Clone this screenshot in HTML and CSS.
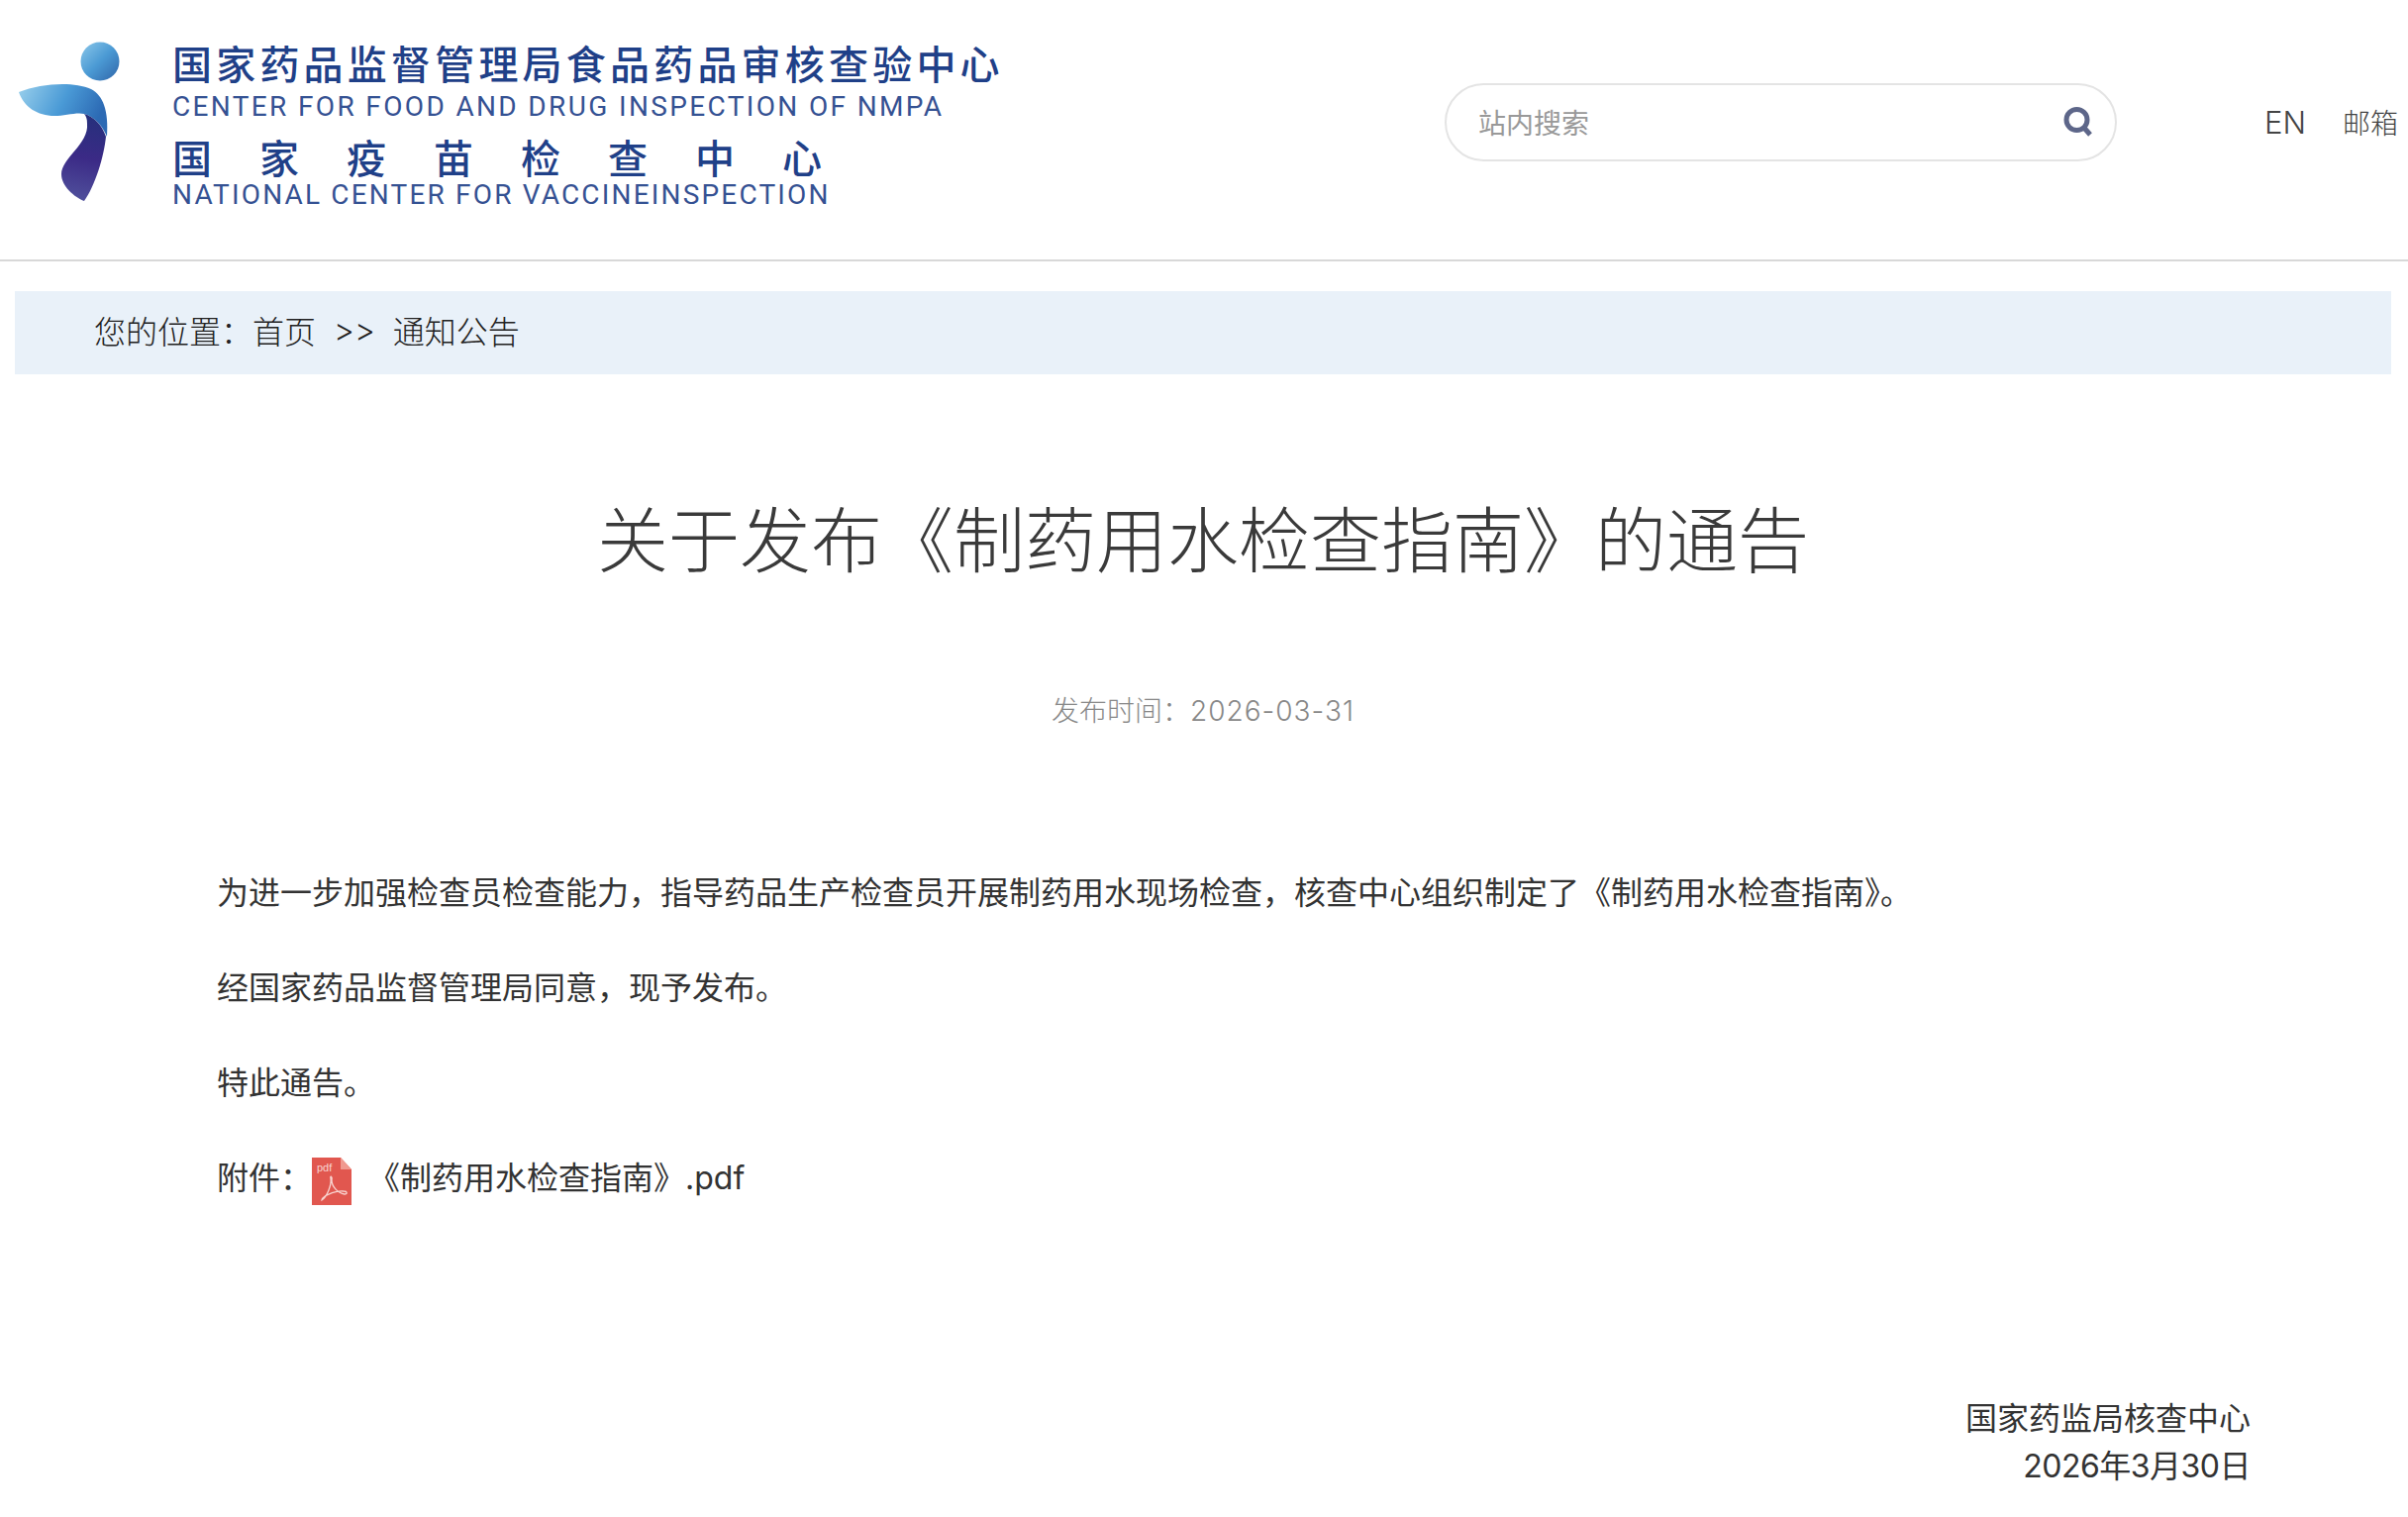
FILE: index.html
```html
<!DOCTYPE html>
<html lang="zh-CN">
<head>
    <meta charset="UTF-8">
    <meta name="viewport" content="width=device-width, initial-scale=1.0">
    <title>关于发布《制药用水检查指南》的通告</title>
    <link rel="stylesheet" href="styles.css">
</head>
<body>
    <div class="header">
        <div class="logo">
            <svg class="logo-mark" viewBox="0 0 130 190" width="130" height="190">
                <defs>
                    <linearGradient id="ball" x1="0" y1="0" x2="1" y2="1">
                        <stop offset="0" stop-color="#8cc8ea"/>
                        <stop offset="0.5" stop-color="#4b9ad4"/>
                        <stop offset="1" stop-color="#2f64a8"/>
                    </linearGradient>
                    <linearGradient id="wing" x1="0" y1="0" x2="1" y2="0.3">
                        <stop offset="0" stop-color="#9ad0ec"/>
                        <stop offset="0.55" stop-color="#4a9ad6"/>
                        <stop offset="1" stop-color="#2c6ab4"/>
                    </linearGradient>
                    <linearGradient id="tail" x1="0.5" y1="0" x2="0.4" y2="1">
                        <stop offset="0" stop-color="#26307c"/>
                        <stop offset="0.5" stop-color="#3b2a86"/>
                        <stop offset="1" stop-color="#50509c"/>
                    </linearGradient>
                </defs>
                <circle cx="101" cy="42" r="19.5" fill="url(#ball)"/>
                <path d="M19 73C42 64 74 62 92 70C104 76 110 92 108 118C103 106 95 98 85 95C78 93 65 97 55 97C38 97 24 88 19 73Z" fill="url(#wing)"/>
                <path d="M85 95C95 98 103 106 107 118C105 138 96 168 85 183C75 179 62 168 62 156C62 140 90 125 88 105C88 100 87 97 85 95Z" fill="url(#tail)"/>
            </svg>
            <div class="logo-text">
                <div class="logo-cn">国家药品监督管理局食品药品审核查验中心</div>
                <div class="logo-en">CENTER FOR FOOD AND DRUG INSPECTION OF NMPA</div>
                <div class="logo-cn logo-wide">国家疫苗检查中心</div>
                <div class="logo-en logo-en2">NATIONAL CENTER FOR VACCINEINSPECTION</div>
            </div>
        </div>
        <div class="header-right">
            <div class="search">
                <span class="search-hint">站内搜索</span>
                <svg class="search-icon" viewBox="0 0 30 30" width="30" height="30">
                    <circle cx="13.5" cy="13" r="10.5" fill="none" stroke="#5d6689" stroke-width="5"/>
                    <path d="M20 20L27 28" fill="none" stroke="#5d6689" stroke-width="5"/>
                </svg>
            </div>
            <a class="top-link link-en">EN</a>
            <a class="top-link">邮箱</a>
        </div>
    </div>

    <div class="main">
        <div class="crumb">
            <span>您的位置&#65306;首页</span>
            <span>&gt;&gt;</span>
            <span>通知公告</span>
        </div>

        <h1 class="title">关于发布《制药用水检查指南》的通告</h1>
        <div class="date">发布时间&#65306;<span class="date-num">2026-03-31</span></div>

        <div class="content">
            <p>为进一步加强检查员检查能力&#65292;指导药品生产检查员开展制药用水现场检查&#65292;核查中心组织制定了《制药用水检查指南》。</p>
            <p>经国家药品监督管理局同意&#65292;现予发布。</p>
            <p>特此通告。</p>
            <p class="attach">
                <span>附件&#65306;</span>
                <svg class="pdf-icon" viewBox="0 0 40 48" width="40" height="48">
                    <path d="M0 0H29L40 12V48H0Z" fill="#e1574f"/>
                    <path d="M29 0L40 12H29Z" fill="#f09a90"/>
                    <text x="5" y="14" class="pdf-label">pdf</text>
                    <path d="M10 43C15 40 20 28 19 21C18 18 21 19 20 23C20 29 26 36 33 37C36 37 36 34 32 34C25 33 15 37 11 41C10 42 10 43 10 43Z" fill="none" stroke="#f8d4d0" stroke-width="1.3"/>
                </svg>
                <span>《制药用水检查指南》.pdf</span>
            </p>
        </div>

        <div class="sign">
            <div>国家药监局核查中心</div>
            <div class="sign-date">2026年3月30日</div>
        </div>
    </div>
</body>
</html>
```

FILE: styles.css
```css
html, body {
    margin: 0;
    padding: 0;
    height: 100%;
    overflow: hidden;
}

body {
    font-family: "Inter", "Noto Sans CJK SC", sans-serif;
    background: #fff;
    color: #333;
}

.header {
    height: 262px;
    border-bottom: 2px solid #d8d8d8;
    display: flex;
    justify-content: space-between;
    align-items: center;
}

.logo {
    display: flex;
    align-items: flex-start;
    height: 262px;
}

.logo-mark {
    margin-top: 20px;
    margin-right: 44px;
    flex: none;
}

.logo-text {
    padding-top: 39px;
    color: #1f4088;
    white-space: nowrap;
}

.logo-cn {
    font-family: "Noto Sans CJK SC", sans-serif;
    font-size: 40px;
    line-height: 48px;
    letter-spacing: 4.2px;
    height: 48px;
    font-weight: 500;
}

.logo-wide {
    letter-spacing: 48px;
    margin-top: 11px;
}

.logo-en {
    font-family: "Roboto", sans-serif;
    font-size: 28px;
    line-height: 30px;
    height: 30px;
    letter-spacing: 2.35px;
    margin-top: 6px;
    opacity: .9;
}

.logo-en2 {
    letter-spacing: 2.17px;
    margin-top: 0;
}

.header-right {
    display: flex;
    align-items: center;
    padding: 0 10px 16px 0;
}

.search {
    width: 679px;
    height: 79px;
    box-sizing: border-box;
    border: 2px solid #e4e4e4;
    border-radius: 40px;
    display: flex;
    align-items: center;
    justify-content: space-between;
    padding: 0 22px 0 32px;
    margin-right: 149px;
}

.search-hint {
    font-size: 28px;
    color: #999;
}

.top-link {
    font-size: 28px;
    color: #444;
    font-weight: 300;
}

.link-en {
    font-size: 31px;
    margin-right: 37px;
}

.main {
    margin: 30px 17px 0 15px;
}

.crumb {
    height: 84px;
    box-sizing: border-box;
    padding: 0 0 6px 80px;
    background: #e9f1f9;
    display: flex;
    align-items: center;
    gap: 18px;
    font-size: 32px;
    font-weight: 300;
    color: #222;
}

.title {
    margin: 118px 0 0;
    font-size: 72px;
    line-height: 100px;
    font-weight: 300;
    text-align: center;
    color: #3a3a3a;
}

.date {
    margin-top: 102px;
    font-size: 28px;
    line-height: 40px;
    font-weight: 300;
    color: #888;
    text-align: center;
}

.date-num {
    letter-spacing: 1px;
}

.content {
    margin-top: 116px;
    padding-left: 204px;
    font-size: 32px;
    line-height: 96px;
}

.content p {
    margin: 0;
}

.attach {
    display: flex;
    align-items: center;
}

.pdf-icon {
    margin: 6px 17px 0 0;
}

.pdf-label {
    font-family: "Liberation Sans", sans-serif;
    font-size: 11px;
    fill: #f8d4d0;
}

.sign {
    margin-top: 171px;
    padding-right: 142px;
    text-align: right;
    font-size: 32px;
    line-height: 48px;
}

.sign-date {
    letter-spacing: -0.5px;
}
```
